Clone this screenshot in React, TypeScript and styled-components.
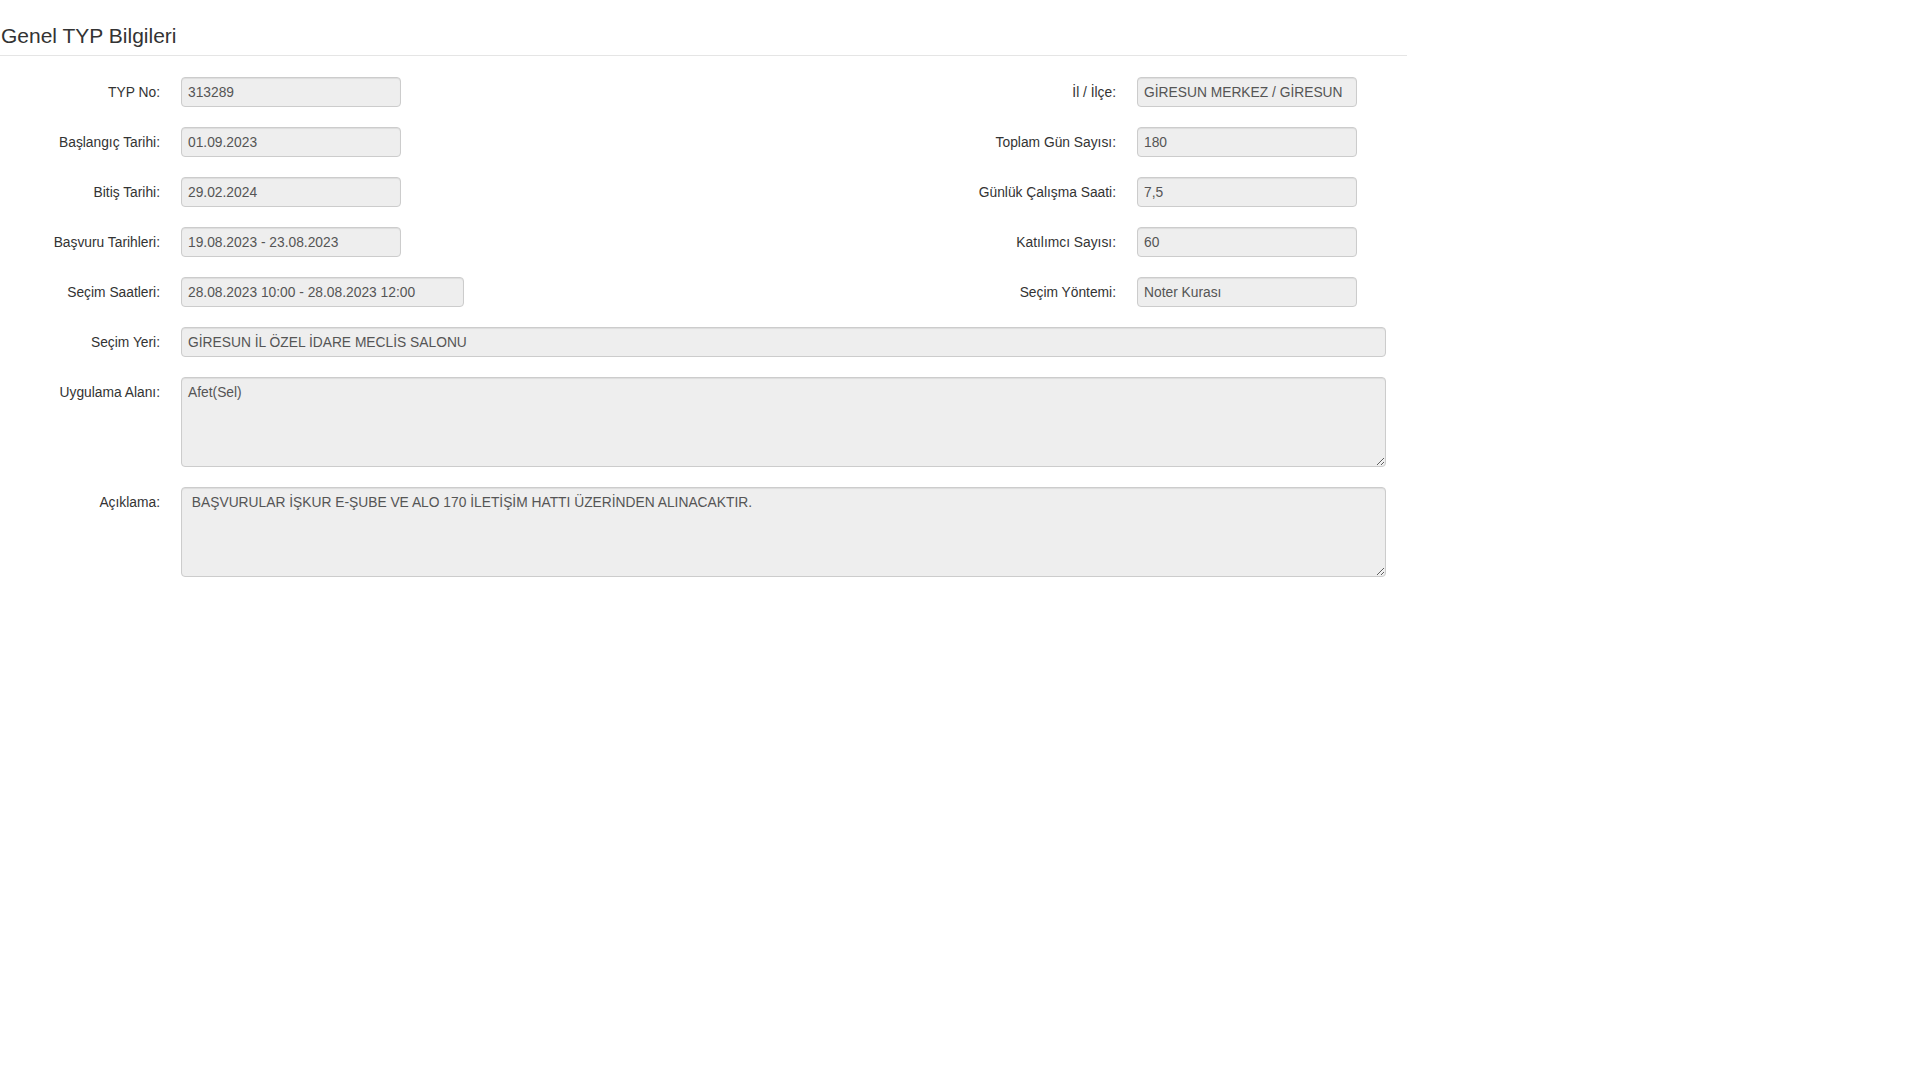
import React from 'react'
import styled, { createGlobalStyle } from 'styled-components';

const GlobalStyle = createGlobalStyle`
  body {
    margin: 0;
    background: #fff;
    font-family: "Liberation Sans", Arial, sans-serif;
    color: #333;
  }
`;

interface pair {
    label: string,
    value: string,
    width?: number,
}

const rows: { left: pair, right?: pair }[] = [
    { left: { label: 'TYP No:', value: '313289' }, right: { label: 'İl / İlçe:', value: 'GİRESUN MERKEZ / GİRESUN' } },
    { left: { label: 'Başlangıç Tarihi:', value: '01.09.2023' }, right: { label: 'Toplam Gün Sayısı:', value: '180' } },
    { left: { label: 'Bitiş Tarihi:', value: '29.02.2024' }, right: { label: 'Günlük Çalışma Saati:', value: '7,5' } },
    { left: { label: 'Başvuru Tarihleri:', value: '19.08.2023 - 23.08.2023' }, right: { label: 'Katılımcı Sayısı:', value: '60' } },
    { left: { label: 'Seçim Saatleri:', value: '28.08.2023 10:00 - 28.08.2023 12:00', width: 283 }, right: { label: 'Seçim Yöntemi:', value: 'Noter Kurası' } },
];

const App: React.FC = () => {
  return (
    <>
      <GlobalStyle />
      <Page>
        <Legend>Genel TYP Bilgileri</Legend>
        <Form>
          {rows.map((r) => (
            <Row key={r.left.label}>
              <Field>
                <Label>{r.left.label}</Label>
                <ReadOnlyBox $width={r.left.width || 220}>{r.left.value}</ReadOnlyBox>
              </Field>
              {r.right && (
                <RightField>
                  <Label $auto>{r.right.label}</Label>
                  <ReadOnlyBox $width={220}>{r.right.value}</ReadOnlyBox>
                </RightField>
              )}
            </Row>
          ))}
          <Row>
            <Field $wide>
              <Label>Seçim Yeri:</Label>
              <ReadOnlyBox $wide>GİRESUN İL ÖZEL İDARE MECLİS SALONU</ReadOnlyBox>
            </Field>
          </Row>
          <Row>
            <Field $wide>
              <Label>Uygulama Alanı:</Label>
              <TextArea readOnly value="Afet(Sel)" />
            </Field>
          </Row>
          <Row>
            <Field $wide>
              <Label>Açıklama:</Label>
              <TextArea readOnly value=" BAŞVURULAR İŞKUR E-ŞUBE VE ALO 170 İLETİŞİM HATTI ÜZERİNDEN ALINACAKTIR." />
            </Field>
          </Row>
        </Form>
      </Page>
    </>
  )
}

export default App;

const Page = styled.div`
    width: 1407px;
    padding-top: 21px;
`;
const Legend = styled.div`
    font-size: 21px;
    line-height: 30px;
    color: #333;
    padding: 0 0 4px 1px;
    border-bottom: 1px solid #e5e5e5;
    margin-bottom: 21px;
`;
const Form = styled.div`
    width: 1386px;
    display: flex;
    flex-direction: column;
    gap: 20px;
`;
const Row = styled.div`
    display: flex;
    align-items: flex-start;
`;
const Field = styled.div<{ $wide?: boolean }>`
    display: flex;
    align-items: flex-start;
    gap: 21px;
    flex: ${p => p.$wide ? 1 : 'none'};
`;
const RightField = styled.div`
    display: flex;
    align-items: flex-start;
    gap: 21px;
    margin-left: auto;
    padding-right: 29px;
`;
const Label = styled.label<{ $auto?: boolean }>`
    width: ${p => p.$auto ? 'auto' : '160px'};
    flex: none;
    text-align: right;
    padding-top: 6px;
    font-size: 13.8px;
    line-height: 19.7px;
    color: #333;
`;
const ReadOnlyBox = styled.div<{ $width?: number, $wide?: boolean }>`
    width: ${p => p.$wide ? 'auto' : `${p.$width}px`};
    flex: ${p => p.$wide ? 1 : 'none'};
    height: 30px;
    box-sizing: border-box;
    padding: 2px 6px 0;
    font-size: 13.8px;
    line-height: 26px;
    color: #555;
    white-space: nowrap;
    overflow: hidden;
    background-color: #eee;
    border: 1px solid #ccc;
    border-radius: 4px;
    box-shadow: inset 0 1px 1px rgba(0, 0, 0, 0.075);
    cursor: not-allowed;
`;
const TextArea = styled.textarea`
    flex: 1;
    height: 90px;
    box-sizing: border-box;
    padding: 5px 6px;
    margin: 0;
    font-family: "Liberation Sans", Arial, sans-serif;
    font-size: 13.8px;
    line-height: 19.7px;
    color: #555;
    background-color: #eee;
    border: 1px solid #ccc;
    border-radius: 4px;
    box-shadow: inset 0 1px 1px rgba(0, 0, 0, 0.075);
    outline: none;
`;
